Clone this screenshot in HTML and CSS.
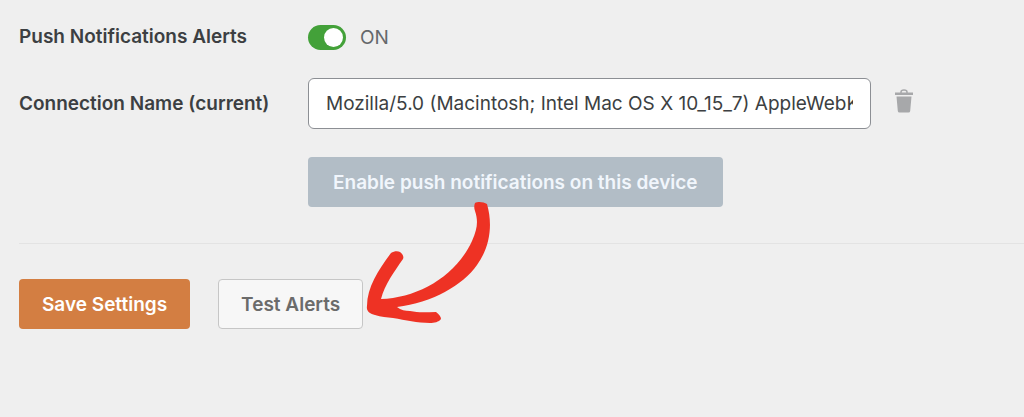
FILE: index.html
```html
<!DOCTYPE html>
<html lang="en">
<head>
  <meta charset="UTF-8" />
  <meta name="viewport" content="width=device-width, initial-scale=1" />
  <title>Push Notifications Settings</title>
  <link rel="stylesheet" href="styles.css">
</head>
<body>

  <form class="settings">
    <div class="row toggle-row">
      <label class="row-label" for="pushAlerts">Push Notifications Alerts</label>
      <div class="field">
        <input type="checkbox" id="pushAlerts" class="toggle" checked />
        <span class="toggle-status">ON</span>
      </div>
    </div>

    <div class="row">
      <label class="row-label" for="connectionName">Connection Name (current)</label>
      <div class="field">
        <input type="text" id="connectionName" class="text-input" value="Mozilla/5.0 (Macintosh; Intel Mac OS X 10_15_7) AppleWebKit/537.36" />
        <button type="button" class="delete" aria-label="Delete connection">
          <svg width="20" height="24" viewBox="0 0 20 24">
            <path d="M7 4V3Q7 1 10 1T13 3V4" fill="none" stroke="currentColor" stroke-width="1.5" />
            <path d="M1 3.5H19V6H1ZM2.5 7.5H17.5L16.2 22Q16 23.5 14.5 23.5H5.5Q4 23.5 3.8 22Z" fill="currentColor" />
          </svg>
        </button>
      </div>
    </div>

    <div class="row enable-row">
      <button type="button" class="btn btn-enable" disabled>Enable push notifications on this device</button>
    </div>

    <div class="actions">
      <button type="submit" class="btn btn-save">Save Settings</button>
      <div class="test">
        <button type="button" class="btn btn-test">Test Alerts</button>
        <!-- arrow pointing at the test button -->
        <svg class="arrow" width="126" height="124" viewBox="0 0 126 124" aria-hidden="true">
          <path fill="#ee3224" d="M109 2C112 0 118 1 121 3C127 24 124 46 111 64C97 84 66 102 31 106C35 109 39 110 44 110C53 112 61 111 70 111C73 113 75 116 75 118C73 121 68 122 64 122C51 122 40 119 27 117C21 116 15 116 9 114C4 113 0 110 1 105C1 86 13 68 25 52C28 50 32 50 34 51C37 53 38 56 37 58C28 71 19 83 15 98C52 97 90 75 106 40C112 27 112 19 109 10C108 7 108 4 109 2Z" />
        </svg>
      </div>
    </div>
  </form>

</body>
</html>
```
FILE: styles.css
```css
body {
  margin: 0;
  background: #efefef;
  color: #3c3f42;
  font-family: Inter, "Liberation Sans", sans-serif;
  font-size: 19px;
  line-height: 24px;
}

.settings {
  padding: 25px 0 24px 19px;
}

.row {
  display: flex;
  align-items: center;
  margin-bottom: 28px;
}

.toggle-row {
  align-items: flex-start;
}

.row-label {
  flex: 0 0 289px;
  font-weight: 600;
}

.field {
  flex: 1;
  display: flex;
  align-items: center;
}

.toggle {
  appearance: none;
  width: 38px;
  height: 25px;
  margin: 0 14px 0 0;
  border-radius: 13px;
  background: #43a139;
  cursor: pointer;
}

.toggle::before {
  content: "";
  display: block;
  width: 19px;
  height: 19px;
  margin: 3px 3px 3px auto;
  border-radius: 50%;
  background: #fff;
}

.toggle:not(:checked) {
  background: #999;
}

.toggle:not(:checked)::before {
  margin-left: 3px;
}

.toggle-status {
  color: #65686b;
}

.text-input {
  box-sizing: border-box;
  flex: 0 1 563px;
  min-width: 0;
  height: 51px;
  padding: 0 17px;
  border: 1px solid #8c8f94;
  border-radius: 6px;
  background: #fff;
  color: #3c3f42;
  font: inherit;
}

.delete {
  margin: 0 0 6px 23px;
  padding: 0;
  border: none;
  background: none;
  color: #a7a8aa;
  cursor: pointer;
  line-height: 0;
}

.enable-row {
  margin: 0 0 36px;
  padding-left: 289px;
}

.btn {
  box-sizing: border-box;
  height: 50px;
  padding: 2px 22px 0;
  border: 1px solid transparent;
  border-radius: 4px;
  font: inherit;
  font-weight: 600;
  cursor: pointer;
}

.btn-enable {
  padding: 2px 24px 0;
  background: #b2bdc6;
  color: #f1f6fc;
  cursor: default;
}

.btn-save {
  background: #d37e42;
  color: #fff;
}

.btn-test {
  border-color: #c6c6c6;
  background: #f7f7f7;
  color: #6b6b6b;
}

.actions {
  display: flex;
  gap: 28px;
  padding-top: 35px;
  border-top: 1px solid #e3e3e3;
}

.test {
  position: relative;
}

.arrow {
  position: absolute;
  left: 100%;
  bottom: 4px;
  margin-left: 3px;
  pointer-events: none;
}
```
